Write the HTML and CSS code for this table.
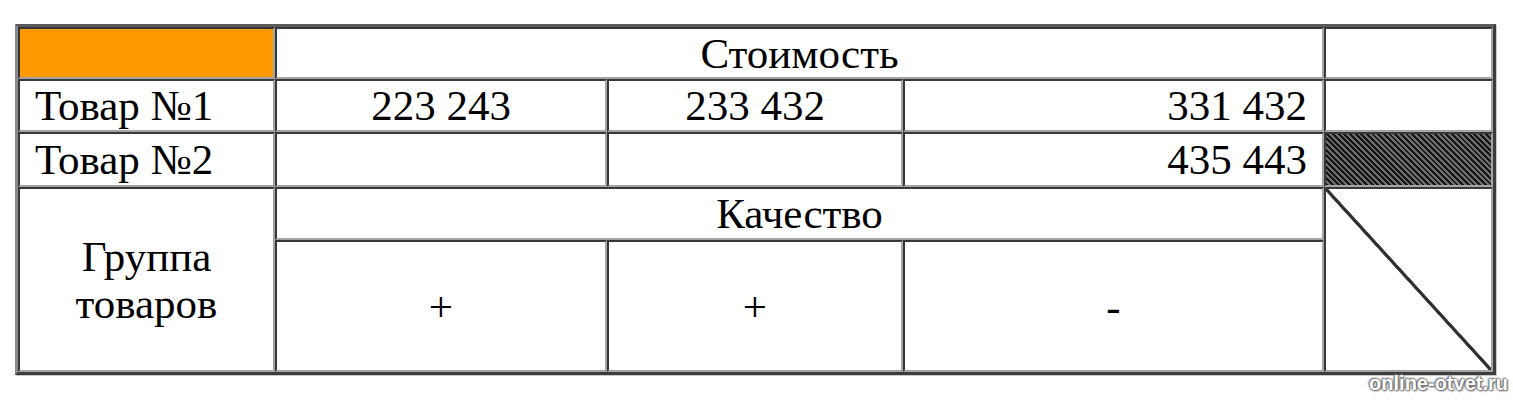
FILE: index.html
```html
<!DOCTYPE html>
<html lang="ru">
<head>
<meta charset="utf-8">
<title>Таблица</title>
<link rel="stylesheet" href="styles.css">
</head>
<body>
<div class="page">
  <table class="grid">
    <colgroup>
      <col class="c1"><col class="c2"><col class="c3"><col class="c4"><col class="c5">
    </colgroup>
    <tr class="r1">
      <td class="orange"></td>
      <td colspan="3" class="center">Стоимость</td>
      <td></td>
    </tr>
    <tr class="r2">
      <td class="left">Товар №1</td>
      <td class="center">223 243</td>
      <td class="center">233 432</td>
      <td class="right">331 432</td>
      <td></td>
    </tr>
    <tr class="r3">
      <td class="left">Товар №2</td>
      <td></td>
      <td></td>
      <td class="right">435 443</td>
      <td class="hatch"></td>
    </tr>
    <tr class="r4">
      <td rowspan="2" class="center group">Группа<br>товаров</td>
      <td colspan="3" class="center">Качество</td>
      <td rowspan="2" class="diag"></td>
    </tr>
    <tr class="r5">
      <td class="center">+</td>
      <td class="center">+</td>
      <td class="center">-</td>
    </tr>
  </table>
  <div class="watermark">online-otvet.ru</div>
</div>
</body>
</html>
```
FILE: styles.css
```css
html, body {
  margin: 0;
  padding: 0;
  background: #ffffff;
}

.page {
  position: relative;
  width: 1513px;
  height: 400px;
  padding: 24px 0 0 15px;
  box-sizing: border-box;
}

.grid {
  table-layout: fixed;
  width: 1481px;
  border-collapse: separate;
  border-spacing: 0;
  border-style: solid;
  border-width: 3px;
  border-top-color: #5a5a5a;
  border-left-color: #8a8a8a;
  border-right-color: #3c3c3c;
  border-bottom-color: #3c3c3c;
  box-shadow: 1px 1px 0 #c8c8c8;
  background: #ffffff;
  font-family: "Liberation Serif", "Times New Roman", serif;
  font-size: 43px;
  color: #000000;
}

.c1 { width: 257px; }
.c2 { width: 332px; }
.c3 { width: 296px; }
.c4 { width: 421px; }
.c5 { width: 169px; }

.grid td {
  border-style: solid;
  border-width: 2px;
  border-top-color: #383838;
  border-left-color: #383838;
  border-right-color: #a4a4a4;
  border-bottom-color: #a4a4a4;
  padding: 0 15px;
  vertical-align: middle;
  line-height: 47px;
  white-space: nowrap;
}

.r1 { height: 52px; }
.r2 { height: 53px; }
.r3 { height: 55px; }
.r4 { height: 53px; }
.r5 { height: 132px; }

.center { text-align: center; }
.left { text-align: left; }
.right { text-align: right; }

.orange {
  background: #ff9900;
}

.hatch {
  background: repeating-linear-gradient(45deg, #151515 0 2px, #6e6e6e 2px 4px);
}

.diag {
  background: linear-gradient(to top right,
    transparent calc(50% - 2px),
    #555555 calc(50% - 1.5px),
    #1e1e1e 50%,
    #555555 calc(50% + 1.5px),
    transparent calc(50% + 2px));
}

.watermark {
  position: absolute;
  right: 5px;
  top: 372px;
  font-family: "Liberation Sans", Arial, sans-serif;
  font-weight: bold;
  font-size: 20px;
  color: #ffffff;
  text-shadow: 0 0 2px #5e5e5e, 0 0 2px #5e5e5e, 1px 1px 2px #6a6a6a, -1px -1px 2px #8a8a8a;
}
```
